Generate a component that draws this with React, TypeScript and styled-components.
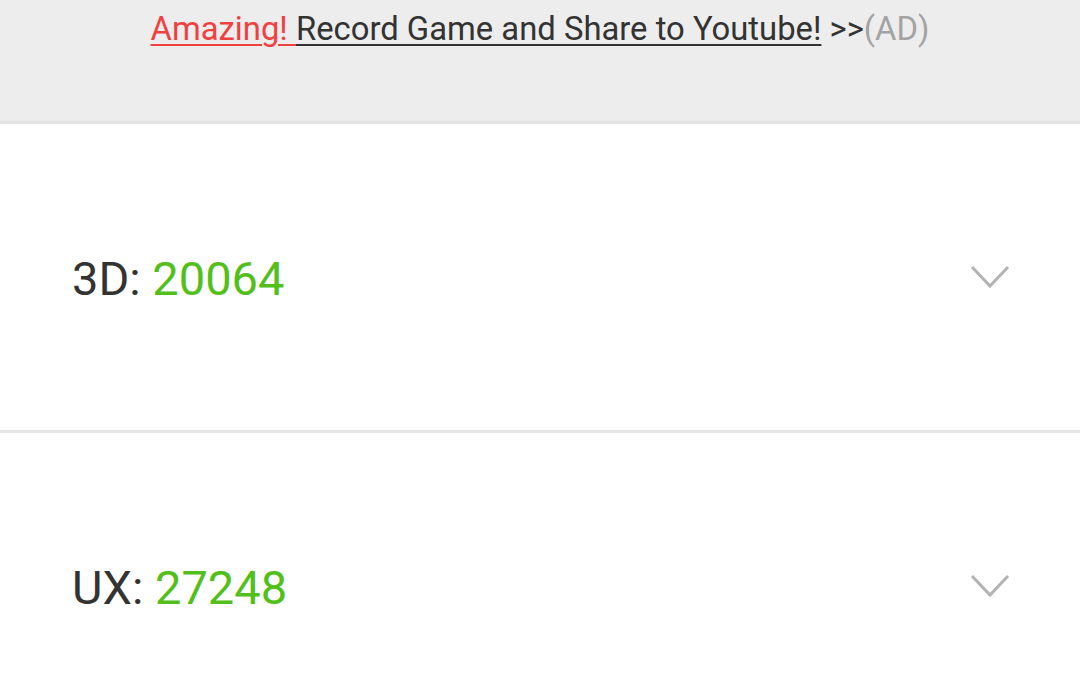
import React from "react";
import styled, { createGlobalStyle } from "styled-components";

const GlobalStyle = createGlobalStyle`
  html, body {
    margin: 0;
    padding: 0;
    background: #ffffff;
    font-family: Roboto, "Liberation Sans", sans-serif;
    overflow: hidden;
  }
`;

const Page = styled.div`
  width: 1080px;
  height: 700px;
  overflow: hidden;
  background: #ffffff;
`;

const AdBar = styled.div`
  height: 114px;
  background: #ededed;
  border-bottom: 3px solid #e3e3e3;
  display: flex;
  justify-content: center;
  padding-top: 7px;
  font-size: 32.8px;
  line-height: 44px;
`;

const AdLink = styled.a<{ $color: string }>`
  color: ${(p) => p.$color};
  text-decoration: underline;
  text-decoration-thickness: 2px;
  text-underline-offset: 4px;
  white-space: pre;
`;

const AdTail = styled.span<{ $color: string }>`
  color: ${(p) => p.$color};
  white-space: pre;
`;

const ScoreRow = styled.div`
  height: 306px;
  display: flex;
  align-items: center;
  justify-content: space-between;
  padding: 0 70px 0 72px;
  border-bottom: 3px solid #e6e6e6;
`;

const Label = styled.div`
  font-size: 47px;
  color: #333333;
  padding-top: 2px;
`;

const Score = styled.span`
  color: #52bf1a;
`;

const Chevron = () => (
  <svg width="40" height="26" viewBox="0 0 40 26">
    <polyline
      points="2,3 20,22 38,3"
      fill="none"
      stroke="#b3b3b3"
      strokeWidth="3"
    />
  </svg>
);

type Result = { name: string; score: number };

const results: Result[] = [
  { name: "3D", score: 20064 },
  { name: "UX", score: 27248 },
];

export default function App() {
  return (
    <Page>
      <GlobalStyle />
      <AdBar>
        <div>
          <AdLink $color="#f0403f">Amazing! </AdLink>
          <AdLink $color="#333333">Record Game and Share to Youtube!</AdLink>
          <AdTail $color="#333333"> &gt;&gt;</AdTail>
          <AdTail $color="#a3a3a3">(AD)</AdTail>
        </div>
      </AdBar>
      {results.map((r) => (
        <ScoreRow key={r.name}>
          <Label>
            {r.name}: <Score>{r.score}</Score>
          </Label>
          <Chevron />
        </ScoreRow>
      ))}
    </Page>
  );
}
